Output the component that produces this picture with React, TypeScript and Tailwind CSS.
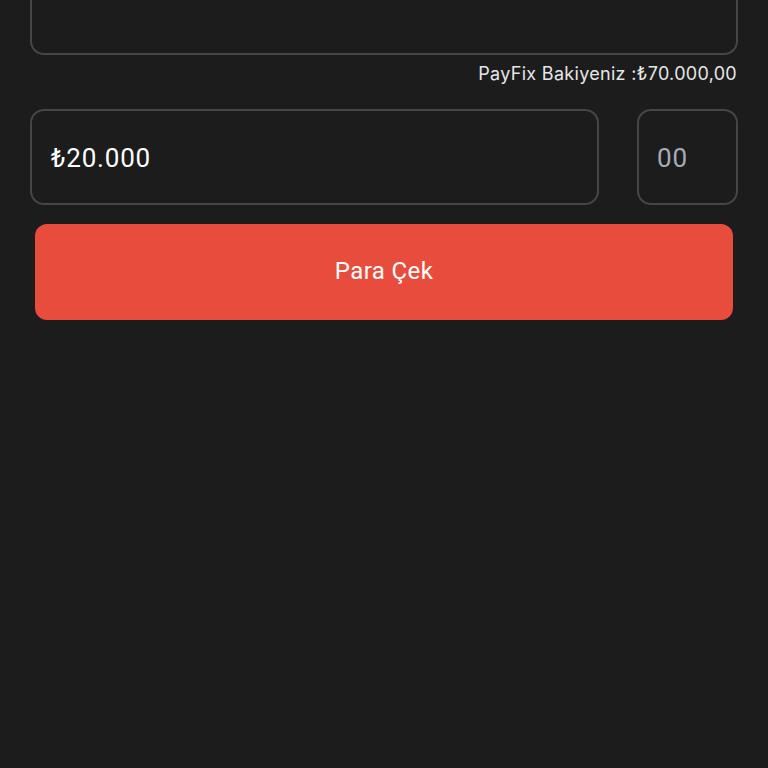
import React from 'react'

const App = () => {
  return (
    <div className="min-h-[768px] w-full bg-[#1c1c1c] overflow-hidden" style={{ fontFamily: 'Roboto, "Liberation Sans", sans-serif' }}>
      <div className="px-[30px]">
        {/* Previous field (scrolled out of view) */}
        <div className="-mt-[41px] h-[96px] rounded-[14px] border-2 border-[#464646] bg-[#1c1c1c]" />

        {/* Balance */}
        <div className="mt-[6px] flex justify-end pr-[1px]">
          <span className="text-[18px] leading-[26px] tracking-[0.3px] text-[#e6e6e6] font-['Inter',sans-serif]">
            PayFix Bakiyeniz :₺70.000,00
          </span>
        </div>

        {/* Amount inputs */}
        <div className="mt-[22px] flex gap-[38px]">
          <div className="flex h-[96px] flex-1 items-center rounded-[14px] border-2 border-[#464646] px-[19px] pt-[3px]">
            <span className="text-[26px] tracking-[0.8px] text-white">₺20.000</span>
          </div>
          <div className="flex h-[96px] w-[101px] items-center rounded-[14px] border-2 border-[#464646] px-[18px] pt-[3px]">
            <span className="text-[26px] tracking-[0.8px] text-[#a4acb8]">00</span>
          </div>
        </div>

        {/* Submit */}
        <div className="mt-[19px] px-[5px]">
          <button className="flex h-[96px] w-full items-center justify-center rounded-[12px] bg-[#e84c3d] pb-[2px] text-[24px] tracking-[0.4px] text-white">
            Para Çek
          </button>
        </div>
      </div>
    </div>
  )
}

export default App
